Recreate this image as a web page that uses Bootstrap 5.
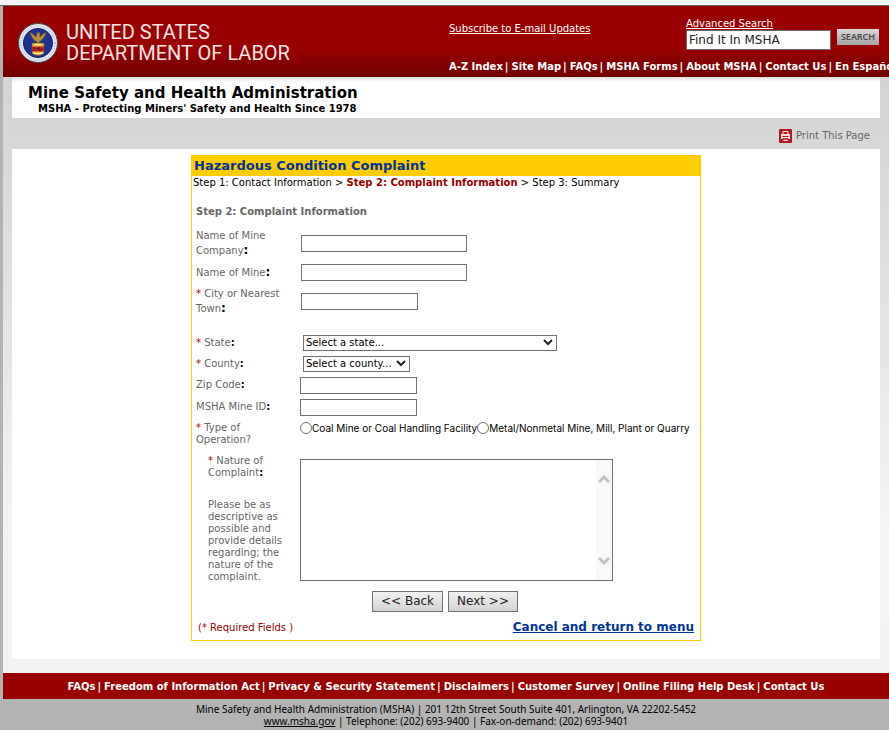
<!DOCTYPE html>
<html lang="en">
<head>
<meta charset="utf-8">
<meta name="viewport" content="width=device-width, initial-scale=1">
<title>MSHA - Hazardous Condition Complaint</title>
<link rel="stylesheet" href="https://cdn.jsdelivr.net/npm/bootstrap@5.3.0/dist/css/bootstrap.min.css">
<style>
  body { font-family: Verdana, "DejaVu Sans", sans-serif; font-size: 10px; line-height: 12px; color: #000; background: #b3b3b3; overflow-x: hidden; }
  .top-strip { height: 6px; background: #f6f6f6; border-bottom: 1px solid #666; }
  .page-shell { margin-left: 3px; }
  .site-header { height: 71px; overflow: hidden; color: #fff; background: linear-gradient(#900 0, #900 60%, #700000 100%); }
  .site-header a, .footer-bar a { color: #fff; }
  .brand { padding: 16px 0 0 15px; gap: 8px; }
  .brand-name { font: 20px/21px Roboto, sans-serif; color: #f6e4e4; }
  .tools { padding-left: 3px; }
  .tools-top { padding-top: 12px; height: 55px; }
  .subscribe { flex: 0 0 237px; padding-top: 5px; }
  .search-box { width: 145px; height: 20px; border: 1px solid #666; padding: 0 2px; font-size: 12px; color: #222; }
  .search-btn { width: 42px; height: 16px; margin: 11px 0 0 6px; border: 0; padding: 0; font: 600 9px/16px "Open Sans", sans-serif; color: #444; background: linear-gradient(#d8d8d8, #a3a3a3); }
  .link-list { font-weight: bold; white-space: nowrap; }
  .link-list a { text-decoration: none; }
  .link-list a + a::before { content: "|"; margin: 0 3px 0 2px; }
  .content-area { padding: 0 9px 14px; background: linear-gradient(#d4d4d4, #d8d8d8 15%, #f3f3f3 75%, #f2f2f2); }
  .agency { background: linear-gradient(#ddd, #fff 5px); padding: 6px 16px 3px; height: 41px; font-weight: bold; }
  .agency h1 { font-size: 15px; line-height: 20px; font-weight: bold; margin: 0; }
  .agency p { margin: 0 0 0 10px; }
  .print-row { height: 31px; padding: 4px 10px 0; gap: 4px; }
  .print-row a { color: #666; text-decoration: none; }
  .panel-white { background: #fff; padding: 6px 0 18px; }
  .complaint { max-width: 510px; border: 1px solid #fc0; }
  .complaint h2 { font-size: 13px; line-height: 20px; font-weight: bold; color: #039; background: #fc0; margin: 0; padding: 0 2px; }
  .crumbs { padding: 1px; }
  .dark-red { color: #900; }
  .complaint h3 { font-size: 10px; line-height: 12px; font-weight: bold; color: #666; margin: 16px 4px 10px; }
  .field-row { padding-left: 4px; min-height: 22px; }
  .field-row.picker-row { min-height: 21px; }
  .field-row.name-row { min-height: 28px; }
  .field-row.tall { min-height: 30px; }
  .field-label { flex: 0 0 104px; color: #666; }
  .field-label.narrow-label { padding-right: 16px; }
  .field-label b { color: #000; line-height: 0; }
  .tall .field-label, .name-row .field-label { flex-basis: 105px; line-height: 15px; }
  .tall b, .name-row b { font-size: 12px; }
  .entry { height: 17px; border: 1px solid #707070; padding: 0 2px; background: #fff; }
  .wide { width: 166px; }
  .short { width: 117px; }
  .picker { height: 16px; border: 1px solid #707070; border-radius: 0; padding: 0 2px; margin-left: 3px; line-height: 13px; color: #000; appearance: none;
    background: #fff url("data:image/svg+xml,%3Csvg xmlns='http://www.w3.org/2000/svg' width='10' height='7'%3E%3Cpath d='M1 1l4 4 4-4' fill='none' stroke='%23222' stroke-width='2'/%3E%3C/svg%3E") no-repeat right 3px center; }
  .state-picker { width: 254px; }
  .county-picker { width: 107px; }
  .choices { font-family: Inter, sans-serif; }
  .choice { appearance: none; width: 12px; height: 12px; border: 1px solid #707070; border-radius: 50%; margin: 0; background: #fff; }
  .choice:checked { background: #333; box-shadow: inset 0 0 0 2px #fff; }
  .nature-row { padding-top: 9px; }
  .nature-label { flex: 0 0 104px; padding: 0 12px 0 12px; color: #666; }
  .nature-hint { margin-top: 20px; }
  .nature-box { width: 313px; height: 122px; border: 1px solid #707070; background: #fff; }
  .nature-box textarea { border: 0; resize: none; outline: 0; padding: 2px; overflow: hidden; }
  .scroll-strip { width: 16px; background: #f8f8f8; padding: 14px 0; }
  .push-btn { height: 21px; padding: 0 8px; font-size: 12px; line-height: 19px; border: 1px solid #707070; color: #222; background: linear-gradient(#f0f0f0, #d4d4d4); }
  .actions { margin-top: 8px; gap: 5px; padding-left: 180px; }
  .form-foot { padding: 8px 6px 5px; }
  .form-foot a { font-size: 12px; line-height: 15px; font-weight: bold; color: #039; }
  .footer-bar { height: 26px; background: #900; color: #fff; padding-top: 2px; }
  .address { padding: 4px 0 3px; font-family: "Noto Sans", sans-serif; }
  .address a { color: #000; }
</style>
</head>
<body>
<div class="top-strip"></div>
<div class="page-shell">
  <header class="site-header d-flex">
    <div class="brand col-6 d-flex align-items-start">
      <svg width="40" height="42" viewBox="0 0 40 42" role="img" aria-label="Department of Labor seal">
        <circle cx="20" cy="21" r="19.5" fill="#e9edf4" stroke="#444a63"/>
        <circle cx="20" cy="21" r="17" fill="none" stroke="#b4bdd3" stroke-width="2" stroke-dasharray="1 1.5"/>
        <circle cx="20" cy="21" r="14.6" fill="#1c3295" stroke="#17256a"/>
        <path d="M12 10l3 2 3 3 1-4 2-1 1 2 0 3 3-3 3-2-1 4-3 4-3 2 1 2h-4l1-2-3-2-3-4z" fill="#b88a3c" stroke="#5b4420" stroke-width=".6"/>
        <path d="M14 21h12v10q-6 5-12 0z" fill="#e9b83c" stroke="#6e4b14" stroke-width=".6"/>
        <path d="M14 24.500h12v5H14z" fill="#c61f22"/>
        <path d="M16 25v4M18 27h2l1-2 1 4 2-3" fill="none" stroke="#53151a"/>
        <path d="M15 31.500h10M17 22.500h6" stroke="#fff1a8"/>
      </svg>
      <div class="brand-name text-nowrap">UNITED STATES<br>DEPARTMENT OF LABOR</div>
    </div>
    <div class="tools col-6">
      <div class="tools-top d-flex align-items-start">
        <div class="subscribe"><a href="#">Subscribe to E-mail Updates</a></div>
        <form class="d-flex align-items-start">
          <div>
            <a href="#" class="d-block">Advanced Search</a>
            <input class="search-box d-block" type="text" value="Find It In MSHA" aria-label="Search MSHA">
          </div>
          <button type="button" class="search-btn">SEARCH</button>
        </form>
      </div>
      <nav class="link-list d-flex" aria-label="Main">
        <a href="#">A-Z Index</a>
        <a href="#">Site Map</a>
        <a href="#">FAQs</a>
        <a href="#">MSHA Forms</a>
        <a href="#">About MSHA</a>
        <a href="#">Contact Us</a>
        <a href="#">En Español</a>
      </nav>
    </div>
  </header>

  <div class="content-area">
    <div class="agency">
      <h1>Mine Safety and Health Administration</h1>
      <p>MSHA - Protecting Miners' Safety and Health Since 1978</p>
    </div>
    <div class="print-row d-flex justify-content-end align-items-center">
      <svg width="13" height="14" viewBox="0 0 13 14" aria-hidden="true">
        <rect width="13" height="14" rx="1" fill="#b01a20"/>
        <path d="M4 5V2.500h5V5" fill="none" stroke="#f3dede"/>
        <path d="M2 5h9v5H2z" fill="#f3dede"/>
        <path d="M3.500 7.500h6M4.500 9v2.500h4V9" fill="#c9474b" stroke="#b01a20"/>
        <path d="M4 11.500h5" stroke="#f3dede"/>
      </svg>
      <a href="#">Print This Page</a>
    </div>

    <main class="panel-white">
      <form class="complaint mx-auto">
        <h2>Hazardous Condition Complaint</h2>
        <div class="crumbs">Step 1: Contact Information &gt; <b class="dark-red">Step 2: Complaint Information</b> &gt; Step 3: Summary</div>
        <h3>Step 2: Complaint Information</h3>

        <div class="field-row tall d-flex align-items-center">
          <label class="field-label narrow-label" for="company">Name of Mine Company<b>:</b></label>
          <input class="entry wide" id="company" type="text">
        </div>
        <div class="field-row name-row d-flex align-items-center">
          <label class="field-label" for="mine">Name of Mine<b>:</b></label>
          <input class="entry wide" id="mine" type="text">
        </div>
        <div class="field-row tall d-flex align-items-center mb-3">
          <label class="field-label narrow-label" for="town"><span class="dark-red">*</span> City or Nearest Town<b>:</b></label>
          <input class="entry short" id="town" type="text">
        </div>
        <div class="field-row picker-row d-flex align-items-center">
          <label class="field-label" for="state"><span class="dark-red">*</span> State<b>:</b></label>
          <select class="picker state-picker" id="state"><option>Select a state...</option></select>
        </div>
        <div class="field-row picker-row d-flex align-items-center">
          <label class="field-label" for="county"><span class="dark-red">*</span> County<b>:</b></label>
          <select class="picker county-picker" id="county"><option>Select a county...</option></select>
        </div>
        <div class="field-row d-flex align-items-center">
          <label class="field-label" for="zip">Zip Code<b>:</b></label>
          <input class="entry short" id="zip" type="text">
        </div>
        <div class="field-row d-flex align-items-center">
          <label class="field-label" for="mineid">MSHA Mine ID<b>:</b></label>
          <input class="entry short" id="mineid" type="text">
        </div>
        <div class="field-row d-flex align-items-start pt-1" role="radiogroup" aria-labelledby="optype">
          <div class="field-label narrow-label" id="optype"><span class="dark-red">*</span> Type of Operation?</div>
          <div class="choices d-flex align-items-center text-nowrap">
            <input class="choice" type="radio" name="op" id="coal"><label for="coal">Coal Mine or Coal Handling Facility</label>
            <input class="choice" type="radio" name="op" id="metal"><label for="metal">Metal/Nonmetal Mine, Mill, Plant or Quarry</label>
          </div>
        </div>
        <div class="field-row nature-row d-flex align-items-start">
          <div class="nature-label">
            <label for="nature"><span class="dark-red">*</span> Nature of Complaint<b class="text-black">:</b></label>
            <div class="nature-hint">Please be as descriptive as possible and provide details regarding; the nature of the complaint.</div>
          </div>
          <div class="nature-box d-flex mt-1">
            <textarea class="flex-grow-1" id="nature"></textarea>
            <div class="scroll-strip d-flex flex-column justify-content-between align-items-center" aria-hidden="true">
              <svg width="12" height="10" viewBox="0 0 12 10"><path d="M1 8l5-5 5 5" fill="none" stroke="#c1c1c1" stroke-width="3"/></svg>
              <svg width="12" height="10" viewBox="0 0 12 10"><path d="M1 2l5 5 5-5" fill="none" stroke="#c1c1c1" stroke-width="3"/></svg>
            </div>
          </div>
        </div>
        <div class="actions d-flex">
          <button type="button" class="push-btn">&lt;&lt; Back</button>
          <button type="button" class="push-btn">Next &gt;&gt;</button>
        </div>
        <div class="form-foot d-flex justify-content-between align-items-center">
          <span class="dark-red">(* Required Fields )</span>
          <a href="#">Cancel and return to menu</a>
        </div>
      </form>
    </main>
  </div>

  <div class="footer-bar d-flex justify-content-center align-items-center">
    <nav class="link-list d-flex" aria-label="Footer">
      <a href="#">FAQs</a>
      <a href="#">Freedom of Information Act</a>
      <a href="#">Privacy &amp; Security Statement</a>
      <a href="#">Disclaimers</a>
      <a href="#">Customer Survey</a>
      <a href="#">Online Filing Help Desk</a>
      <a href="#">Contact Us</a>
    </nav>
  </div>
  <footer class="address text-center">
    Mine Safety and Health Administration (MSHA) | 201 12th Street South Suite 401, Arlington, VA 22202-5452<br>
    <a href="#">www.msha.gov</a> | Telephone: (202) 693-9400 | Fax-on-demand: (202) 693-9401
  </footer>
</div>
<script src="https://cdn.jsdelivr.net/npm/bootstrap@5.3.0/dist/js/bootstrap.bundle.min.js"></script>
</body>
</html>
